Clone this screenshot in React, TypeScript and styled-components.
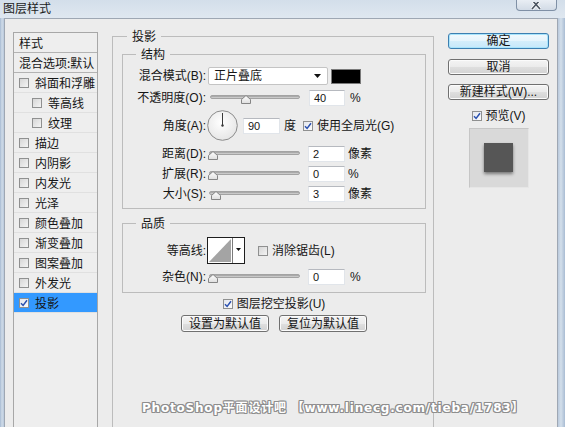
import React from "react";
import styled, { createGlobalStyle } from "styled-components";

const GlobalStyle = createGlobalStyle`
  * { box-sizing: border-box; }
  html, body {
    margin: 0;
    padding: 0;
    background: #ececec;
  }
  body {
    font-family: "Liberation Sans", "Noto Sans CJK SC", sans-serif;
    font-size: 12px;
    color: #151515;
  }
`;

const Window = styled.div`
  position: relative;
  width: 565px;
  height: 427px;
  overflow: hidden;
  display: flex;
  flex-direction: column;
`;

const TitleBar = styled.div`
  height: 18px;
  flex: none;
  display: flex;
  align-items: flex-start;
  padding-left: 3px;
  background: linear-gradient(#d3deea, #dfe7f0);
`;

const Title = styled.span`
  padding-top: 1px;
  font-family: "Noto Sans CJK SC", sans-serif;
  font-size: 12px;
  line-height: 14px;
  color: #1c1c1c;
`;

const CloseButton = styled.div`
  margin-left: auto;
  margin-right: 8px;
  width: 41px;
  height: 11px;
  display: flex;
  justify-content: center;
  align-items: flex-end;
  border: 1px solid #7f90a6;
  border-top: none;
  border-radius: 0 0 4px 4px;
  background: linear-gradient(#e9eef4, #d2dbe6);
`;

const Frame = styled.div`
  flex: 1;
  display: flex;
  padding: 0 7px 0 4px;
  background: linear-gradient(
    to right,
    #a6bad2 0,
    #cfdbe8 2px,
    #b9c9dc 4px,
    #b9c9dc calc(100% - 7px),
    #d3dfeb calc(100% - 4px),
    #a9bcd3 100%
  );
  min-height: 0;
`;

const Body = styled.div`
  flex: 1;
  display: flex;
  align-items: flex-start;
  gap: 14px;
  padding: 0 8px;
  background: #ececec;
  border: 1px solid #9ea7b3;
  border-bottom: none;
  overflow: hidden;
`;

/* ---------- left style list ---------- */

const StyleList = styled.div`
  flex: none;
  width: 85px;
  height: 420px;
  margin-top: 13px;
  border: 1px solid #a7a7a7;
  background: #eeeeee;
`;

const ListHeader = styled.div`
  height: 20px;
  padding-left: 5px;
  display: flex;
  align-items: center;
  font-family: "Noto Sans CJK SC", sans-serif;
  line-height: 14px;
  border-bottom: 1px solid #b3b3b3;
  white-space: nowrap;
`;

const ListItem = styled.div<{ $indent?: boolean; $active?: boolean }>`
  height: 20px;
  display: flex;
  align-items: center;
  gap: 6px;
  padding-left: ${({ $indent }) => ($indent ? "18px" : "5px")};
  border-bottom: 1px solid #e0e0e0;
  background: ${({ $active }) => ($active ? "#3399ff" : "transparent")};
  font-family: "Noto Sans CJK SC", sans-serif;
  line-height: 14px;
  white-space: nowrap;
`;

/* ---------- checkbox ---------- */

const Box = styled.span<{ $on?: boolean }>`
  flex: none;
  width: 10px;
  height: 10px;
  display: inline-flex;
  align-items: center;
  justify-content: center;
  border: 1px solid #8f9090;
  background: ${({ $on }) =>
    $on
      ? "linear-gradient(135deg, #e4e7ee, #fbfbfb)"
      : "linear-gradient(135deg, #d6d6d6, #f4f4f4)"};
`;

const CheckBox: React.FC<{ on?: boolean }> = ({ on }) => (
  <Box $on={on}>
    {on && (
      <svg width="8" height="8" viewBox="0 0 8 8">
        <path d="M1 4.2 L3.1 6.4 L7 1.2" stroke="#2b51b0" strokeWidth="1.5" fill="none" />
      </svg>
    )}
  </Box>
);

/* ---------- group boxes ---------- */

const Group = styled.fieldset`
  flex: none;
  width: 322px;
  height: 420px;
  margin: 10px 0 0;
  padding: 0 7px 0 9px;
  min-width: 0;
  border: 1px solid #bcbcbc;
`;

const SubGroup = styled.fieldset<{ $mt: number; $pt: number; $pb: number }>`
  margin: ${({ $mt }) => $mt}px 0 0;
  padding: ${({ $pt }) => $pt}px 0 ${({ $pb }) => $pb}px;
  min-width: 0;
  border: 1px solid #bcbcbc;
`;

const Legend = styled.legend<{ $ml: number }>`
  margin-left: ${({ $ml }) => $ml}px;
  padding: 0 5px;
  font-family: "Noto Sans CJK SC", sans-serif;
  font-size: 12px;
  line-height: 14px;
`;

const Row = styled.div<{ $h: number; $mt?: number }>`
  height: ${({ $h }) => $h}px;
  margin-top: ${({ $mt }) => $mt ?? 0}px;
  display: flex;
  align-items: center;
`;

const Label = styled.span`
  flex: none;
  width: 83px;
  text-align: right;
  white-space: nowrap;
  line-height: 14px;
`;

const Gap = styled.span<{ $w: number }>`
  flex: none;
  width: ${({ $w }) => $w}px;
`;

const Text = styled.span`
  white-space: nowrap;
  line-height: 14px;
`;

const Select = styled.div`
  flex: none;
  width: 120px;
  height: 18px;
  display: flex;
  align-items: center;
  justify-content: space-between;
  padding: 0 6px 0 5px;
  background: #ffffff;
  border: 1px solid #c4c4c4;
  border-radius: 2px;
  line-height: 14px;
`;

const Swatch = styled.div`
  flex: none;
  width: 30px;
  height: 15px;
  background: #000;
  border: 1px solid #7a7a7a;
`;

const Input = styled.div<{ $w: number }>`
  flex: none;
  width: ${({ $w }) => $w}px;
  height: 16px;
  padding-left: 4px;
  display: flex;
  align-items: center;
  background: #fff;
  border: 1px solid #e1e5ea;
  border-top-color: #b6b9bf;
  font-size: 11px;
`;

const SliderBox = styled.div<{ $w: number }>`
  position: relative;
  flex: none;
  width: ${({ $w }) => $w}px;
  height: 16px;
`;

const Track = styled.div`
  position: absolute;
  top: 5px;
  left: 2px;
  right: 0;
  height: 4px;
  border-radius: 2px;
  border: 1px solid #a3a3a3;
  background: linear-gradient(#9b9b9b, #d8d8d8);
`;

const Thumb = styled.svg`
  position: absolute;
  top: 5px;
`;

const Slider: React.FC<{ w: number; frac: number }> = ({ w, frac }) => (
  <SliderBox $w={w}>
    <Track />
    <Thumb width="10" height="9" viewBox="0 0 10 9" style={{ left: 1 + frac * (w - 12) }}>
      <defs>
        <linearGradient id="tg" x1="0" y1="0" x2="0" y2="1">
          <stop offset="0" stopColor="#ffffff" />
          <stop offset="1" stopColor="#dedede" />
        </linearGradient>
      </defs>
      <path d="M5 0.5 L9.5 4.5 V8.5 H0.5 V4.5 Z" fill="url(#tg)" stroke="#858585" />
    </Thumb>
  </SliderBox>
);

const Dial = () => (
  <svg width="31" height="31" viewBox="0 0 31 31">
    <defs>
      <radialGradient id="dg" cx="0.45" cy="0.4" r="0.7">
        <stop offset="0" stopColor="#ffffff" />
        <stop offset="1" stopColor="#e2e2e2" />
      </radialGradient>
    </defs>
    <circle cx="15.5" cy="15.5" r="14.8" fill="url(#dg)" stroke="#8c8c8c" />
    <line x1="15.5" y1="15.5" x2="15.5" y2="3" stroke="#3a3a3a" strokeWidth="1" />
    <circle cx="15.5" cy="15.5" r="1.2" fill="#3a3a3a" />
  </svg>
);

const Contour = () => (
  <svg width="38" height="27" viewBox="0 0 38 27">
    <rect x="0.5" y="0.5" width="37" height="26" fill="#fff" stroke="#1e1e1e" />
    <path d="M2 25 L24 2 V25 Z" fill="#a4a4a4" />
    <line x1="25.5" y1="1" x2="25.5" y2="26" stroke="#7a7a7a" />
    <path d="M29 11 H34 L31.5 14 Z" fill="#111" />
  </svg>
);

const ButtonRow = styled.div`
  margin-top: 4px;
  display: flex;
  justify-content: center;
  gap: 10px;
`;

const Button = styled.div<{ $w: number; $h: number; $primary?: boolean }>`
  flex: none;
  width: ${({ $w }) => $w}px;
  height: ${({ $h }) => $h}px;
  display: flex;
  align-items: center;
  justify-content: center;
  border: 1px solid ${({ $primary }) => ($primary ? "#3c7fb1" : "#707070")};
  border-radius: 3px;
  box-shadow: inset 0 0 0 1px
    ${({ $primary }) => ($primary ? "#a9e4fb" : "#fbfbfb")};
  background: ${({ $primary }) =>
    $primary
      ? "linear-gradient(#f2f9fd 0%, #e5f4fc 50%, #d4eefb 51%, #c6e8fa 100%)"
      : "linear-gradient(#f4f4f4 0%, #ebebeb 50%, #dfdfdf 51%, #d2d2d2 100%)"};
  line-height: 14px;
  white-space: nowrap;
`;

const CheckRow = styled.div<{ $mt: number }>`
  margin-top: ${({ $mt }) => $mt}px;
  height: 14px;
  display: flex;
  align-items: center;
  justify-content: center;
  gap: 4px;
`;

/* ---------- right column ---------- */

const Side = styled.div`
  flex: none;
  width: 101px;
  margin-top: 14px;
  display: flex;
  flex-direction: column;
  align-items: center;
`;

const SideSpacer = styled.div<{ $h: number }>`
  height: ${({ $h }) => $h}px;
`;

const Preview = styled.div`
  margin-top: 5px;
  width: 60px;
  height: 60px;
  display: flex;
  align-items: center;
  justify-content: center;
  background: #d9d9d9;
  border: 1px solid #c6c6c6;
  border-right-color: #e6e6e6;
  border-bottom-color: #e6e6e6;
`;

const PreviewSquare = styled.div`
  width: 29px;
  height: 29px;
  margin-top: -1px;
  background: #565656;
  box-shadow: 0 2px 3px rgba(0, 0, 0, 0.45);
`;

const Watermark = styled.div`
  position: absolute;
  left: 142px;
  top: 401px;
  font-family: "DejaVu Sans", "Noto Sans CJK SC", sans-serif;
  font-weight: bold;
  font-size: 12px;
  line-height: 14px;
  letter-spacing: 0.8px;
  color: #ffffff;
  white-space: nowrap;
  text-shadow: -1px -1px 0 #8e8e8e, 1px -1px 0 #8e8e8e, -1px 1px 0 #8e8e8e,
    1px 1px 0 #8e8e8e, 0 1px 0 #8e8e8e, 0 -1px 0 #8e8e8e, 1px 0 0 #8e8e8e,
    -1px 0 0 #8e8e8e;
`;

const EFFECTS: { name: string; indent?: boolean; on?: boolean }[] = [
  { name: "斜面和浮雕" },
  { name: "等高线", indent: true },
  { name: "纹理", indent: true },
  { name: "描边" },
  { name: "内阴影" },
  { name: "内发光" },
  { name: "光泽" },
  { name: "颜色叠加" },
  { name: "渐变叠加" },
  { name: "图案叠加" },
  { name: "外发光" },
  { name: "投影", on: true },
];

const SLIDERS = [
  { label: "距离(D):", value: "2", unit: "像素", frac: 0, mt: 5 },
  { label: "扩展(R):", value: "0", unit: "%", frac: 0, mt: 4 },
  { label: "大小(S):", value: "3", unit: "像素", frac: 0.04, mt: 4 },
];

const App: React.FC = () => (
  <Window>
    <GlobalStyle />
    <TitleBar>
      <Title>图层样式</Title>
      <CloseButton>
        <svg width="11" height="8" viewBox="0 0 11 8">
          <path d="M1 -2 L9 7 M9 -2 L1 7" stroke="#ffffff" strokeWidth="3.2" />
          <path d="M1 -2 L9 7 M9 -2 L1 7" stroke="#4a5461" strokeWidth="1.6" />
        </svg>
      </CloseButton>
    </TitleBar>
    <Frame>
      <Body>
        <StyleList>
          <ListHeader>样式</ListHeader>
          <ListHeader>混合选项:默认</ListHeader>
          {EFFECTS.map((e) => (
            <ListItem key={e.name} $indent={e.indent} $active={e.on}>
              <CheckBox on={e.on} />
              {e.name}
            </ListItem>
          ))}
        </StyleList>

        <Group>
          <Legend $ml={5}>投影</Legend>
          <SubGroup $mt={4} $pt={6} $pb={6}>
            <Legend $ml={13}>结构</Legend>
            <Row $h={18}>
              <Label>混合模式(B):</Label>
              <Gap $w={2} />
              <Select>
                <Text>正片叠底</Text>
                <svg width="7" height="4" viewBox="0 0 7 4">
                  <path d="M0 0 H7 L3.5 4 Z" fill="#111" />
                </svg>
              </Select>
              <Gap $w={3} />
              <Swatch />
            </Row>
            <Row $h={16} $mt={5}>
              <Label>不透明度(O):</Label>
              <Gap $w={2} />
              <Slider w={92} frac={0.4} />
              <Gap $w={9} />
              <Input $w={36}>40</Input>
              <Gap $w={5} />
              <Text>%</Text>
            </Row>
            <Row $h={31} $mt={4}>
              <Label>角度(A):</Label>
              <Gap $w={1} />
              <Dial />
              <Gap $w={5} />
              <Input $w={37}>90</Input>
              <Gap $w={4} />
              <Text>度</Text>
              <Gap $w={7} />
              <CheckBox on />
              <Gap $w={4} />
              <Text>使用全局光(G)</Text>
            </Row>
            {SLIDERS.map((s) => (
              <Row key={s.label} $h={16} $mt={s.mt}>
                <Label>{s.label}</Label>
                <Gap $w={1} />
                <Slider w={93} frac={s.frac} />
                <Gap $w={8} />
                <Input $w={37}>{s.value}</Input>
                <Gap $w={3} />
                <Text>{s.unit}</Text>
              </Row>
            ))}
          </SubGroup>

          <SubGroup $mt={7} $pt={7} $pb={7}>
            <Legend $ml={13}>品质</Legend>
            <Row $h={27}>
              <Label>等高线:</Label>
              <Gap $w={1} />
              <Contour />
              <Gap $w={13} />
              <CheckBox />
              <Gap $w={4} />
              <Text>消除锯齿(L)</Text>
            </Row>
            <Row $h={16} $mt={5}>
              <Label>杂色(N):</Label>
              <Gap $w={1} />
              <Slider w={93} frac={0} />
              <Gap $w={8} />
              <Input $w={37}>0</Input>
              <Gap $w={5} />
              <Text>%</Text>
            </Row>
          </SubGroup>

          <CheckRow $mt={4}>
            <CheckBox on />
            <Text>图层挖空投影(U)</Text>
          </CheckRow>
          <ButtonRow>
            <Button $w={88} $h={17}>设置为默认值</Button>
            <Button $w={88} $h={17}>复位为默认值</Button>
          </ButtonRow>
        </Group>

        <Side>
          <Button $w={101} $h={16} $primary>确定</Button>
          <SideSpacer $h={10} />
          <Button $w={101} $h={16}>取消</Button>
          <SideSpacer $h={9} />
          <Button $w={101} $h={16}>新建样式(W)...</Button>
          <CheckRow $mt={9}>
            <CheckBox on />
            <Text>预览(V)</Text>
          </CheckRow>
          <Preview>
            <PreviewSquare />
          </Preview>
        </Side>
      </Body>
    </Frame>
    <Watermark>PhotoShop平面设计吧 【www.linecg.com/tieba/1783】</Watermark>
  </Window>
);

export default App;
